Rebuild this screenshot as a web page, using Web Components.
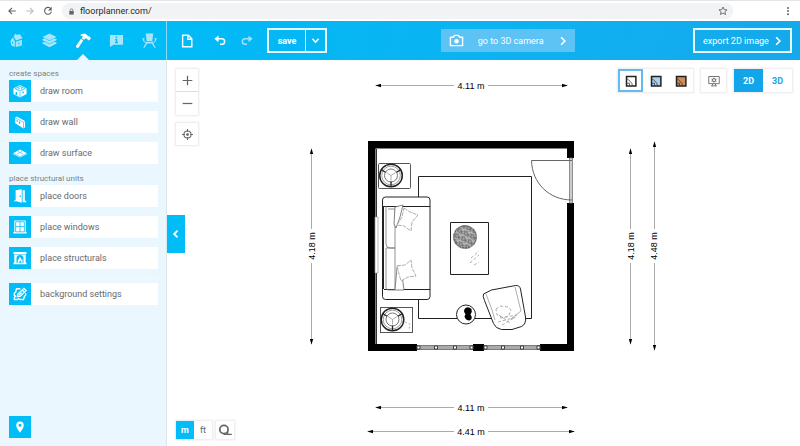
<!DOCTYPE html>
<html lang="en">
<head>
<meta charset="utf-8">
<title>Floorplanner</title>
<style>
html, body { height: 100%; margin: 0; }
body { font-family: Roboto, "Open Sans", sans-serif; color: #666; background: #fff; overflow: hidden; }
</style>
</head>
<body>
<fp-app></fp-app>
<script>
const define = (name, html, setup) => {
  const template = document.createElement('template');
  template.innerHTML = html;
  customElements.define(name, class extends HTMLElement {
    constructor() {
      super();
      this.attachShadow({ mode: 'open' }).append(template.content.cloneNode(true));
    }
    connectedCallback() { if (setup) setup(this, this.shadowRoot); }
  });
};

const line = 'fill="none" stroke="currentColor"';
const icons = {
  back: `<path ${line} stroke-width="1.8" d="M14 8H3M8 3L3 8l5 5"/>`,
  forward: `<path ${line} stroke-width="1.8" d="M2 8h11M8 3l5 5-5 5"/>`,
  reload: `<path ${line} stroke-width="1.8" d="M12.5 4.5A5.5 5.5 0 1 0 13.4 9"/><path fill="currentColor" d="M14 1v6H8z"/>`,
  lock: `<path fill="currentColor" d="M3 7h10v8H3z"/><path ${line} stroke-width="1.7" d="M5 8V5a3 3 0 0 1 6 0v3"/>`,
  star: `<path ${line} stroke-width="1.4" d="M8 1.600l1.900 4.200 4.600.4-3.500 3 1.100 4.500L8 11.300l-4.100 2.400L5 9.200l-3.500-3 4.600-.4z"/>`,
  dots: `<g fill="currentColor"><circle cx="8" cy="3" r="1.600"/><circle cx="8" cy="8" r="1.600"/><circle cx="8" cy="13" r="1.600"/></g>`,
  house: `<g fill="currentColor"><path d="M1.500 8.500L4 4.500l2.200 4.200v6L2.500 13.300zM4.800 3.700L6 3V1h1.800v1.200l3.700-.9 3 4.400L7.500 8z"/><path d="M7.200 9.200l6.600-2v6.200L7.200 15z"/></g><path fill="none" style="stroke:var(--icon-cut)" stroke-width="1" d="M3.800 9.200v2.300M10.500 10v2.300"/>`,
  layers: `<g fill="currentColor"><path d="M8 .5l7.500 3.700L8 8 .5 4.200z"/><path d="M.5 6.400L3 5.900l5 2.600 5-2.600 2.500.5v1.200L8 11.500.5 7.600z"/><path d="M.5 10L2.600 9.200 8 12l5.400-2.800 2.100.8v1.200L8 15.300.5 11.200z"/></g>`,
  hammer: `<g fill="currentColor"><path d="M5.500 1.800C8 .5 10.700.5 12.300 2.200l.9 1.300 1-.5 1.800 2.700-2.500 1.900-1.800-2.200-1.500.2-1.200 1.200-2.300-1.600 1.200-1.500c-.7-.9-1.500-1.300-2.600-1.300z"/><path d="M6 5.800l2.200 1.800-5 7.300c-.8.8-2.800-.6-2.200-1.800z"/></g>`,
  info: `<path fill="currentColor" d="M1 2h14v10.500H5L1 15z"/><path fill="none" style="stroke:var(--icon-cut)" stroke-width="1.500" d="M8 3.700v1.500M8 6.300v4M6.700 6.800h1.500M6.500 10.200h3"/>`,
  chair: `<g fill="currentColor"><path d="M4 .5h8L11 8.500H5zM3.700 9.200h8.600v2H3.700z"/><path d="M.2 5.500h2.500v1.200H2L3.200 10h-1zM15.800 5.500h-2.500v1.200h.7L12.800 10h1zM4 11h1.700l-3 4.700H1.300zM12 11h-1.700l3 4.700h1.400z"/></g>`,
  file: `<path ${line} stroke-width="1.600" d="M3 1.500h6.500L13.500 5.500v9H3zM9 1.500V6h4.500"/>`,
  undo: `<path ${line} stroke-width="2" d="M3 5h7.500a3.700 3.700 0 0 1 0 7.400H8"/><path fill="currentColor" d="M6 .5V9.500L.5 5z"/>`,
  redo: `<path ${line} stroke-width="2" d="M13 5H5.500a3.700 3.700 0 0 0 0 7.400H8"/><path fill="currentColor" d="M10 .5V9.500L15.500 5z"/>`,
  down: `<path ${line} stroke-width="2.800" d="M2.500 5L8 11l5.500-6"/>`,
  right: `<path ${line} stroke-width="2.600" d="M5 2l6 6-6 6"/>`,
  left: `<path ${line} stroke-width="3" d="M10.500 2.500L5 8l5.500 5.500"/>`,
  camera: `<path ${line} stroke-width="1.500" stroke-linejoin="round" d="M1.500 4.500h3L6 2.500h4l1.500 2h3v9h-13z"/><circle cx="8" cy="8.800" r="2.400" fill="currentColor"/>`,
  room: `<path fill="currentColor" d="M.5 5L8 1l7.500 4v6.500L8 15.500l-7.500-4z"/><g fill="none" style="stroke:var(--icon-cut)" stroke-width=".8"><path d="M2.500 5.300L8 2.500l5.500 2.800L8 8zM8 9v6M5.500 4l2 1-2 1.400M10.500 4L9 5l2 1.200"/><path stroke-width="1.600" d="M3.800 9v3.500M11.500 8.500v2"/></g>`,
  wall: `<path fill="currentColor" d="M2.500 2.800L4.200 1.600l9.600 5.200v7.300L12 15.400 2.500 9.300z"/><g fill="none" style="stroke:var(--icon-cut)"><path stroke-width=".7" d="M2.700 3.200L12 8.300v6.800M12 8.300l1.600-1"/><path stroke-width="1.500" d="M7.500 7.500v2.600M4.800 6v1.600"/></g>`,
  surface: `<path fill="currentColor" d="M.5 8L8 4l7.500 4v1.300L8 13.200.5 9.300z"/><g fill="none" style="stroke:var(--icon-cut)" stroke-width=".6"><path d="M.7 8.400L8 12.200l7.300-3.800M5.500 6l6 3.200M10.500 6L4.500 9.300"/></g>`,
  door: `<g fill="currentColor"><path d="M3 1.500L10 .2v15.600L3 13.800zM11 1.500h2.500v12H15V15h-4zM1.500 12.800h1.500v1.400H1.500z"/></g><circle cx="8.300" cy="8.200" r=".9" style="fill:var(--icon-cut)"/>`,
  window: `<path fill="currentColor" d="M1.500 .5h13v13.300h1v1.700H.5v-1.700h1z"/><path fill="none" style="stroke:var(--icon-cut)" stroke-width=".9" d="M3 2h10v11.500H3zM8 2v11.500M3 7.500h10"/>`,
  fire: `<path fill="currentColor" d="M.5 1h15v2h-1v10.500h1V15H.5v-1.500h1V3h-1z"/><path style="fill:var(--icon-cut)" d="M4 13.500V8.700a4 4 0 0 1 8 0v4.800zM2 3.300h12v.8H2z"/><path fill="currentColor" d="M5.600 13.500C4.500 10 7.500 9.500 7.300 6.500 9.800 8 9.500 9.500 10 10.500l.7-1c.6 1.500.4 3-.3 4H9.500c.3-1.600-.5-2.200-1.300-3-.2 1.200-1.300 1.500-.9 3z"/>`,
  edit: `<g ${line} stroke-width="1.500"><path d="M8.500 2H4L3 6 1.500 7v2.500L3 10.500 1.500 12v2.300H5l1.500-1 2 1H12l1-3.500 1.500-1.500V7"/><path d="M5 11l.8-3.200 6.700-6.300 2.500 2.500-6.500 6.400zM10.500 3.500L13 6M7 9.200l3-3"/></g>`,
  pin: `<path fill="currentColor" fill-rule="evenodd" d="M8 .5a5 5 0 0 1 5 5.100C13 9.500 8 15.500 8 15.500S3 9.500 3 5.600A5 5 0 0 1 8 .5zm0 3a2 2 0 1 0 0 4 2 2 0 0 0 0-4z"/>`,
  plus: `<path ${line} stroke-width="1.800" d="M8 1v14M1 8h14"/>`,
  minus: `<path ${line} stroke-width="1.800" d="M1 8h14"/>`,
  target: `<g ${line} stroke-width="1.500"><circle cx="8" cy="8" r="5.200"/><path d="M8 0v4M8 12v4M0 8h4M12 8h4"/></g><circle cx="8" cy="8" r="2" fill="currentColor"/>`,
  swatch: `<path style="fill:var(--swatch)" stroke="#222" stroke-width="2" d="M2 2h12.500v12.500H2z"/><path fill="none" stroke="#333" stroke-width="1" d="M2 4.500l3 2L9 11l1 3.500M2 11h4v3.500"/>`,
  screen: `<g ${line} stroke-width="1.200"><path d="M1 2h14v9.500H1zM4 14.500h8M6 12v2M10 12v2"/><circle cx="8" cy="6.800" r="2"/><path stroke-width="1.400" d="M8 3.600v1.200M8 8.800V10M4.900 5l1.200.8M9.900 7.800l1.200.8M4.900 8.600l1.200-.8M9.900 5.800l1.200-.8"/></g>`,
  tape: `<g ${line}><circle cx="6.800" cy="7.500" r="4.700" stroke-width="2"/><path stroke-width="1.600" d="M6.500 13h9.300M11 10v3.500"/></g>`
};

define('fp-icon', `<style>
:host { display: block; flex: none; width: var(--icon-size, 14px); height: var(--icon-size, 14px); }
svg { display: block; width: 100%; height: 100%; overflow: visible; }
</style><svg viewBox="0 0 16 16" aria-hidden="true"></svg>`,
(el, root) => { root.querySelector('svg').innerHTML = icons[el.getAttribute('name')]; });

define('fp-browser-bar', `<style>
:host { display: flex; align-items: center; box-sizing: border-box; height: 21px; padding: 0 7px; background: #fff; color: #5f6368; border-top: 1px solid #e3e5e8; --icon-size: 10px; }
nav { display: flex; gap: 8px; margin-right: 9px; }
button { all: unset; display: block; }
button[disabled] { color: #b9bcc0; }
.box { flex: 1; display: flex; align-items: center; gap: 5px; height: 16px; padding: 0 5px 0 6px; border-radius: 8px; background: #f1f3f4; }
.box fp-icon { --icon-size: 7px; }
.box button fp-icon { --icon-size: 10px; }
input { all: unset; flex: 1; min-width: 0; height: 16px; font: 9px/16px Roboto, sans-serif; color: #27292c; }
.more { margin-left: 50px; }
</style>
<nav aria-label="History"><button aria-label="Back"><fp-icon name="back"></fp-icon></button><button disabled aria-label="Forward"><fp-icon name="forward"></fp-icon></button><button aria-label="Reload"><fp-icon name="reload"></fp-icon></button></nav>
<div class="box"><fp-icon name="lock"></fp-icon><input aria-label="Address" value="floorplanner.com/"><button aria-label="Bookmark"><fp-icon name="star"></fp-icon></button></div>
<button class="more" aria-label="Menu"><fp-icon name="dots"></fp-icon></button>`);

define('fp-tabs', `<style>
:host { display: flex; align-items: stretch; box-sizing: border-box; height: 39px; border-right: 1px solid #8bdcfb; background: #00bdf8; --icon-cut: #00bdf8; --icon-size: 15px; }
button { all: unset; position: relative; flex: 1; display: grid; place-items: center; color: #a5e6fd; }
button.on { color: #fff; --icon-size: 16px; }
button.on::after { content: ""; position: absolute; left: 50%; bottom: 0; margin-left: -6px; border: 6px solid transparent; border-top: 0; border-bottom-color: #eaf7fe; }
</style>
<button aria-label="Project"><fp-icon name="house"></fp-icon></button><button aria-label="Floors"><fp-icon name="layers"></fp-icon></button><button class="on" aria-label="Build"><fp-icon name="hammer"></fp-icon></button><button aria-label="Info"><fp-icon name="info"></fp-icon></button><button aria-label="Furniture"><fp-icon name="chair"></fp-icon></button>`);

define('fp-toolbar', `<style>
:host { display: grid; grid-template-columns: 6fr auto 5fr; align-items: center; box-sizing: border-box; height: 39px; padding: 0 8px 0 13px; color: #fff; background: linear-gradient(100deg, #00bbf6, #12aeef 75%, #14a9eb); font-size: 9px; white-space: nowrap; }
button { all: unset; box-sizing: border-box; display: flex; align-items: center; }
.left { display: flex; align-items: center; }
.undo, .redo { --icon-size: 12px; }
.undo { margin: 0 15px 0 20px; }
.redo { margin-right: 14px; opacity: .6; }
.save { display: flex; height: 25px; box-sizing: border-box; border: 2px solid #e5f8ff; font-weight: 700; }
.save button { justify-content: center; width: 36px; }
.save button + button { width: 20px; border-left: 1px solid #e5f8ff; --icon-size: 9px; }
.camera { height: 23px; width: 134px; padding: 0 7px 0 8px; justify-content: space-between; background: #5dc2f4; --icon-size: 15px; }
.camera fp-icon:last-child, .export fp-icon { --icon-size: 10px; }
.export { justify-self: end; height: 25px; width: 99px; padding: 0 7px 0 8px; justify-content: space-between; border: 2px solid #e5f8ff; }
</style>
<div class="left"><button aria-label="New file"><fp-icon name="file"></fp-icon></button><button class="undo" aria-label="Undo"><fp-icon name="undo"></fp-icon></button><button class="redo" aria-label="Redo"><fp-icon name="redo"></fp-icon></button><div class="save"><button>save</button><button aria-label="Save options"><fp-icon name="down"></fp-icon></button></div></div>
<button class="camera"><fp-icon name="camera"></fp-icon><span>go to 3D camera</span><fp-icon name="right"></fp-icon></button>
<button class="export"><span>export 2D image</span><fp-icon name="right"></fp-icon></button>`);

define('fp-tool', `<style>
:host { display: block; }
button { all: unset; display: flex; align-items: center; width: 100%; height: 22px; background: #fff; font-size: 9px; color: #666a6c; }
i { display: grid; place-items: center; width: 22px; height: 22px; margin-right: 9px; background: #00bdf8; color: #fff; --icon-cut: #00bdf8; --icon-size: 14px; }
</style><button><i><fp-icon></fp-icon></i><slot></slot></button>`,
(el, root) => {
  const icon = document.createElement('fp-icon');
  icon.setAttribute('name', el.getAttribute('icon'));
  root.querySelector('i').replaceChildren(icon);
});

define('fp-sidebar', `<style>
:host { display: flex; flex-direction: column; box-sizing: border-box; padding: 8px 8px 8px 9px; border-right: 1px solid #dce7ec; background: #eaf7fe; }
section { display: flex; flex-direction: column; gap: 9px; }
h2 { margin: 0 0 -9px; font-size: 8px; font-weight: 400; line-height: 12px; color: #7b8285; }
section + section { margin-top: 9px; }
.settings { border-top: 1px solid #f3fafe; padding-top: 4px; }
.pin { all: unset; display: grid; place-items: center; width: 22px; height: 22px; margin-top: auto; background: #00bdf8; color: #fff; --icon-size: 12px; }
</style>
<section><h2>create spaces</h2><fp-tool icon="room">draw room</fp-tool><fp-tool icon="wall">draw wall</fp-tool><fp-tool icon="surface">draw surface</fp-tool></section>
<section><h2>place structural units</h2><fp-tool icon="door">place doors</fp-tool><fp-tool icon="window">place windows</fp-tool><fp-tool icon="fire">place structurals</fp-tool></section>
<section class="settings"><fp-tool icon="edit">background settings</fp-tool></section>
<button class="pin" aria-label="Location"><fp-icon name="pin"></fp-icon></button>`);

define('fp-button-group', `<style>
:host { display: flex; box-shadow: 0 0 2px 1px #e8e8e8; background: #fff; }
:host([vertical]) { flex-direction: column; }
</style><slot></slot>`);

define('fp-plan', `<style>
:host { display: block; min-width: 0; min-height: 0; }
svg { display: block; width: 100%; height: 100%; }
text { font: 9px "Liberation Sans", Arial, sans-serif; fill: #000; text-anchor: middle; }
.dim { stroke: #aaa; stroke-width: 1; fill: none; marker-start: url(#arrow); marker-end: url(#arrow); }
.thin { fill: #fff; stroke: #555; stroke-width: 1; }
.ink { fill: #fff; stroke: #222; stroke-width: 1; }
.faint { fill: none; stroke: #999; stroke-width: .8; }
</style>
<svg viewBox="167 60 633 386" role="img" aria-label="Floor plan of a living room">
<defs><marker id="arrow" viewBox="0 0 7 4" refX="6" refY="2" markerWidth="6" markerHeight="4" markerUnits="userSpaceOnUse" orient="auto-start-reverse"><path d="M0 0L7 2 0 4z"/></marker>
<pattern id="leaves" width="7" height="6" patternUnits="userSpaceOnUse" patternTransform="rotate(25)"><rect width="7" height="6" fill="#bbb"/><path d="M0 1l2 1 1-2 2 3 2-1M0 4l2-1 1 2 2-2 2 2M1 0l1 5M4 1v3M6 2l-1 4" fill="none" stroke="#555" stroke-width=".6"/></pattern>
<g id="lamp"><circle r="11.300" fill="#fff" stroke="#222" stroke-width="1.500"/><circle r="9.300" fill="none" stroke="#777" stroke-width=".7"/><circle r="6.500" fill="none" stroke="#555" stroke-width=".8"/><path d="M0 11V6M-10-6l4.500 2.700M10-6L5.500-3.300" stroke="#222" stroke-width="1.300"/><path d="M0 5V0l-4.500-3M0 0l4.500-3" fill="none" stroke="#999" stroke-width=".8"/></g></defs>
<path class="dim" d="M376 85.500H567"/><path class="dim" d="M376 407.500H567"/><path class="dim" d="M368 431.500H574"/><path class="dim" d="M311.500 149V344"/><path class="dim" d="M630.500 149V344"/><path class="dim" d="M654.500 142V350"/>
<g fill="#fff"><path d="M454 79h34v12h-34zM454 401h34v12h-34zM454 425h34v12h-34zM306 229h12v34h-12zM625 229h12v34h-12zM648 229h12v34h-12z"/></g>
<text x="471" y="89">4.11 m</text><text x="471" y="411">4.11 m</text><text x="471" y="435">4.41 m</text>
<text transform="translate(315 246) rotate(-90)">4.18 m</text><text transform="translate(634 246) rotate(-90)">4.18 m</text><text transform="translate(657 246) rotate(-90)">4.48 m</text>
<path fill="#000" fill-rule="evenodd" d="M368 141h206v210H368zM375.500 148.500V344H567V148.500z"/>
<path d="M376.500 149V344" stroke="#333"/><path fill="#fff" stroke="#999" stroke-width=".7" d="M375 217h3v56h-3z"/>
<path fill="#fff" d="M566 158h9v45h-9z"/><path fill="#ccc" stroke="#777" stroke-width=".8" d="M569.500 158h3v45h-3z"/><path fill="none" stroke="#666" d="M572 160.500H531.500C532 183 549 200 572 200"/>
<path fill="#fff" d="M417 343h56v8h-56zM484 343h56v8h-56z"/><path fill="#aaa" stroke="#666" stroke-width=".8" d="M417 345.500h56v4h-56zM484 345.500h56v4h-56z"/><g fill="#fff" stroke="#222" stroke-width=".8"><path d="M417 346h3v3h-3zM434.500 346h3v3h-3zM453.500 346h3v3h-3zM470 346h3v3h-3zM484 346h3v3h-3zM501.500 346h3v3h-3zM520.500 346h3v3h-3zM537 346h3v3h-3z"/></g>
<path class="thin" style="stroke:#222" d="M418.500 176.500h113v142h-113z"/>
<rect class="thin" x="378.500" y="163.500" width="32" height="25" rx="1"/><use href="#lamp" x="391" y="175.500"/>
<rect class="thin" x="380.500" y="307.500" width="32" height="25"/><use href="#lamp" x="392.500" y="319.500"/><path class="faint" stroke-dasharray="2 2" d="M405 322l5 2-1 6"/>
<rect class="ink" x="382.500" y="197" width="47.500" height="102.500" rx="3"/><path class="ink" d="M382.500 206.500h47.500M384 289.500h46M383.500 207v82" />
<path fill="none" stroke="#777" stroke-width=".8" d="M386 206v38q0 4 4 4h5v-39h-7M386 248h9v42h-7q-2 0-2-3z"/>
<path class="faint" style="stroke:#666;fill:#fff" d="M395 207l8-2-3 12-4 11-2-4zM397 268q0-4 4-1l3 23h-9z"/>
<path class="faint" style="fill:#fff" stroke-dasharray="4 1" d="M404 208l6 4 8 3-6 7-1 9-7-5-7-1 5-8zM397 266l8-1 6-5 1 8 4 8-8 1-7 4-2-7z"/>
<path class="thin" style="stroke:#222" d="M450.500 222.500h38v52h-38z"/><circle cx="465" cy="237" r="12" fill="url(#leaves)"/><circle cx="465" cy="237" r="11" fill="none" stroke="#555" stroke-dasharray="2 1"/><path class="faint" stroke-dasharray="3 2" d="M471 258l8-7M470 263l9-8M474 265l5-3"/>
<circle class="ink" cx="466" cy="314.500" r="9.500" stroke-width=".8"/><path d="M465.500 308q3-2 6 1 1 3-1 5.500 3 4-1 6-4 0-5-4l1-2.500q-3-3 0-6z"/>
<path class="ink" d="M483.500 294l8-4 24-4.500q4-.5 5 3.500l5 28q1 7-4 9.500-9 4.500-20 3-6-1-8-6l-9-23q-2-4.500-1-6.500z"/><path class="faint" d="M486 294l6 16 3 10M515 287l6 24-5 4-5 4"/><path class="faint" stroke-dasharray="3 2" d="M496 309l4-3 8 1 3 3-2 5-5 3-7-3zM500 318l17-3M498 322l19-5M502 325l12-7M499 315l11 8"/>
</svg>`);

define('fp-workspace', `<style>
:host { position: relative; display: grid; grid-template: 1fr / 1fr; min-height: 0; background: #fff; }
.tools { position: absolute; inset: 9px 8px auto 9px; display: flex; align-items: flex-start; justify-content: space-between; }
.zoom { display: grid; gap: 8px; --icon-size: 11px; }
.view { display: flex; gap: 8px; }
.units { position: absolute; left: 9px; bottom: 7px; display: flex; gap: 4px; }
button { all: unset; box-sizing: border-box; display: grid; place-items: center; width: 22px; height: 22px; color: #666; background: #fff; font-size: 9px; }
.zoom button + button { height: 24px; border-top: 1px solid #ddd; }
.view button { width: 25px; height: 23px; --icon-size: 12px; }
.view .selected { border: 2px solid #61bcf1; }
.view .mode { width: 29px; font-weight: 700; color: #13a5e9; }
.view .mode.on { color: #fff; background: #13a5e9; }
.units button { width: 18px; height: 18px; --icon-size: 14px; }
.units .on { background: #00bdf8; color: #fff; font-weight: 700; }
.handle { position: absolute; left: 0; top: 155px; width: 18px; height: 38px; background: #00bdf8; color: #fff; --icon-size: 10px; }
</style>
<fp-plan></fp-plan>
<div class="tools"><div class="zoom"><fp-button-group vertical><button aria-label="Zoom in"><fp-icon name="plus"></fp-icon></button><button aria-label="Zoom out"><fp-icon name="minus"></fp-icon></button></fp-button-group><fp-button-group><button aria-label="Center plan"><fp-icon name="target"></fp-icon></button></fp-button-group></div>
<div class="view"><fp-button-group><button class="selected" aria-label="Outline style" style="--swatch:#fff"><fp-icon name="swatch"></fp-icon></button><button aria-label="Blue style" style="--swatch:#a9d1f2"><fp-icon name="swatch"></fp-icon></button><button aria-label="Wood style" style="--swatch:#c98f5f"><fp-icon name="swatch"></fp-icon></button></fp-button-group><fp-button-group><button aria-label="Display settings"><fp-icon name="screen"></fp-icon></button></fp-button-group><fp-button-group><button class="mode on">2D</button><button class="mode">3D</button></fp-button-group></div></div>
<button class="handle" aria-label="Collapse sidebar"><fp-icon name="left"></fp-icon></button>
<div class="units"><fp-button-group><button class="on">m</button><button>ft</button></fp-button-group><fp-button-group><button aria-label="Measure"><fp-icon name="tape"></fp-icon></button></fp-button-group></div>`);

define('fp-app', `<style>
:host { display: grid; grid-template: auto auto minmax(0, 1fr) / 167px minmax(0, 1fr); height: 100vh; }
fp-browser-bar { grid-column: 1 / -1; }
</style><fp-browser-bar></fp-browser-bar><fp-tabs></fp-tabs><fp-toolbar></fp-toolbar><fp-sidebar></fp-sidebar><fp-workspace></fp-workspace>`);
</script>
</body>
</html>
